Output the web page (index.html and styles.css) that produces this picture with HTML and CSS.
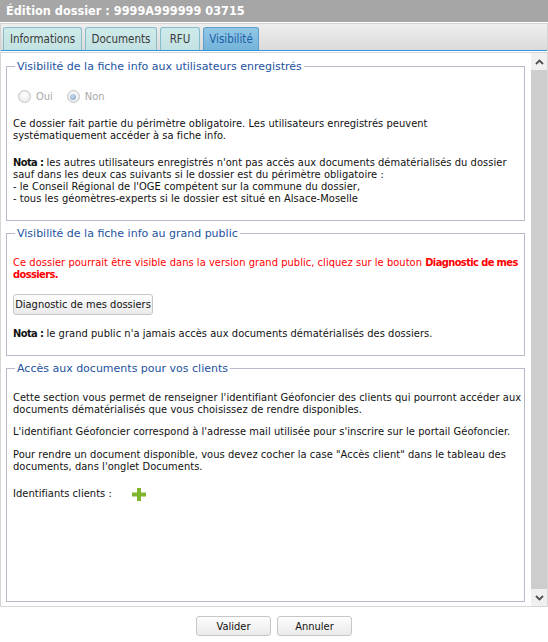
FILE: index.html
```html
<!DOCTYPE html>
<html lang="fr">
<head>
<meta charset="utf-8">
<title>Édition dossier</title>
<link rel="stylesheet" href="styles.css">
</head>
<body>
<div class="dialog">
  <div class="titlebar">Édition dossier : 9999A999999 03715</div>
  <div class="tabbar">
    <div class="tabs">
      <div class="tab tab-info">Informations</div>
      <div class="tab tab-docs">Documents</div>
      <div class="tab tab-rfu">RFU</div>
      <div class="tab tab-vis active">Visibilité</div>
    </div>
  </div>
  <div class="panel">
    <div class="scroll">
      <fieldset class="fs fs1">
        <legend>Visibilité de la fiche info aux utilisateurs enregistrés</legend>
        <div class="radios">
          <label class="radio"><input type="radio" name="vis" disabled><span>Oui</span></label>
          <label class="radio"><input type="radio" name="vis" checked disabled><span>Non</span></label>
        </div>
        <p class="txt p-first">Ce dossier fait partie du périmètre obligatoire. Les utilisateurs enregistrés peuvent<br>systématiquement accéder à sa fiche info.</p>
        <p class="txt p-nota"><b>Nota :</b> les autres utilisateurs enregistrés n'ont pas accès aux documents dématérialisés du dossier<br>sauf dans les deux cas suivants si le dossier est du périmètre obligatoire :<br>- le Conseil Régional de l'OGE compétent sur la commune du dossier,<br>- tous les géomètres-experts si le dossier est situé en Alsace-Moselle</p>
      </fieldset>
      <fieldset class="fs fs2">
        <legend>Visibilité de la fiche info au grand public</legend>
        <p class="txt red">Ce dossier pourrait être visible dans la version grand public, cliquez sur le bouton <b>Diagnostic de mes<br>dossiers.</b></p>
        <button class="btn btn-diag" type="button">Diagnostic de mes dossiers</button>
        <p class="txt p-nota2"><b>Nota :</b> le grand public n'a jamais accès aux documents dématérialisés des dossiers.</p>
      </fieldset>
      <fieldset class="fs fs3">
        <legend>Accès aux documents pour vos clients</legend>
        <p class="txt p-a">Cette section vous permet de renseigner l'identifiant Géofoncier des clients qui pourront accéder aux<br>documents dématérialisés que vous choisissez de rendre disponibles.</p>
        <p class="txt p-b">L'identifiant Géofoncier correspond à l'adresse mail utilisée pour s'inscrire sur le portail Géofoncier.</p>
        <p class="txt p-c">Pour rendre un document disponible, vous devez cocher la case "Accès client" dans le tableau des<br>documents, dans l'onglet Documents.</p>
        <div class="ids">
          <span class="txt">Identifiants clients :</span>
          <svg class="plus" width="14" height="13" viewBox="0 0 14 13" aria-label="Ajouter">
            <rect x="5" y="0" width="4" height="13" fill="#7fb52c"/>
            <rect x="0" y="4.5" width="14" height="4" fill="#7fb52c"/>
          </svg>
        </div>
      </fieldset>
    </div>
    <div class="scrollbar">
      <div class="sb-btn">
        <svg width="9" height="6" viewBox="0 0 9 6"><path d="M1 5 L4.5 1.5 L8 5" fill="none" stroke="#505050" stroke-width="1.8"/></svg>
      </div>
      <div class="sb-thumb"></div>
      <div class="sb-btn">
        <svg width="9" height="6" viewBox="0 0 9 6"><path d="M1 1 L4.5 4.5 L8 1" fill="none" stroke="#505050" stroke-width="1.8"/></svg>
      </div>
    </div>
  </div>
  <div class="actions">
    <button class="btn btn-act" type="button">Valider</button>
    <button class="btn btn-act" type="button">Annuler</button>
  </div>
</div>
</body>
</html>
```
FILE: styles.css
```css
html, body {
  margin: 0;
  padding: 0;
  background: #ffffff;
}
body {
  font-family: "DejaVu Sans Condensed", "DejaVu Sans", sans-serif;
  font-size: 11px;
  color: #111;
}
.dialog {
  width: 548px;
  height: 642px;
  display: flex;
  flex-direction: column;
}
.titlebar {
  height: 22px;
  line-height: 22px;
  background: #a6a6a6;
  color: #ffffff;
  font-weight: bold;
  font-size: 12.6px;
  padding-left: 6px;
  box-sizing: border-box;
}
.tabbar {
  margin-top: 1px;
  height: 28px;
  border: 1px solid #d3d3d3;
  border-bottom: none;
  background: linear-gradient(#eeeeee, #dadada);
  box-sizing: border-box;
}
.tabs {
  height: 27px;
  padding: 3px 0 0 2px;
  box-sizing: border-box;
  border-bottom: 1px solid #2e96de;
  display: flex;
  gap: 3px;
  align-items: flex-end;
}
.tab {
  height: 23px;
  box-sizing: border-box;
  border: 1px solid #86bccc;
  border-bottom: none;
  border-radius: 3px 3px 0 0;
  background: linear-gradient(#cfeaea, #c2e2e1);
  color: #3b3b3b;
  font-size: 11.5px;
  display: flex;
  align-items: center;
  justify-content: center;
}
.tab-info { width: 79px; }
.tab-docs { width: 72px; }
.tab-rfu { width: 40px; }
.tab-vis { width: 56px; }
.tab.active {
  background: linear-gradient(#92c8e6, #74b3da);
  border-color: #5d9fcc;
  color: #1a5fa6;
}
.panel {
  margin-top: 1px;
  height: 555px;
  border: 1px solid #d6d6d6;
  box-sizing: border-box;
  display: flex;
}
.scroll {
  flex: 1;
  padding-top: 7px;
  overflow: hidden;
}
.scrollbar {
  width: 16px;
  background: #f0f0f0;
  display: flex;
  flex-direction: column;
}
.sb-btn {
  height: 17px;
  display: flex;
  align-items: center;
  justify-content: center;
}
.sb-thumb {
  flex: 1;
  background: #cdcdcd;
}
.fs {
  margin: 0 6px 6px 5px;
  padding: 0 6px;
  border: 1px solid #b9b9c9;
  min-width: 0;
}
.fs legend {
  margin-left: 2px;
  padding: 0 2px 0 2px;
  color: #2452a0;
  font-family: "DejaVu Sans", sans-serif;
  font-size: 11px;
  line-height: 13px;
}
.txt {
  margin: 0;
  line-height: 11.7px;
  white-space: nowrap;
  letter-spacing: 0.05px;
}
.txt b {
  letter-spacing: -0.6px;
}
.radios {
  margin-top: 17px;
  display: flex;
  gap: 14px;
  height: 13px;
  padding-left: 5px;
}
.radio {
  display: flex;
  align-items: center;
  color: #a8a8a8;
  gap: 5px;
}
.radio input {
  appearance: none;
  -webkit-appearance: none;
  margin: 0;
  width: 13px;
  height: 13px;
  border-radius: 50%;
  border: 1px solid #c4c4c4;
  background: radial-gradient(circle at 50% 40%, #ffffff, #e4e4e4);
  box-sizing: border-box;
  position: relative;
}
.radio input:checked::after {
  content: "";
  position: absolute;
  left: 2.5px;
  top: 2.5px;
  width: 6px;
  height: 6px;
  border-radius: 50%;
  background: radial-gradient(circle at 40% 35%, #c8dcef, #7a9fc6);
}
.p-first { margin-top: 15px; }
.p-nota { margin-top: 16px; margin-bottom: 16px; }
.red { color: #ff0000; margin-top: 17px; }
.btn {
  font-family: inherit;
  font-size: 11px;
  color: #111;
  border: 1px solid #c6c6c6;
  border-radius: 3px;
  background: linear-gradient(#fdfdfd, #eaeaea);
  padding: 0;
  box-sizing: border-box;
}
.btn-diag {
  display: block;
  margin-top: 13px;
  width: 140px;
  height: 21px;
}
.p-nota2 { margin-top: 13px; margin-bottom: 16px; }
.p-a { margin-top: 17px; }
.p-b { margin-top: 10px; }
.p-c { margin-top: 12px; }
.ids {
  margin-top: 15px;
  height: 113px;
  display: flex;
  align-items: flex-start;
  gap: 20px;
}
.plus { display: block; }
.actions {
  margin-top: 9px;
  display: flex;
  justify-content: center;
  gap: 6px;
}
.btn-act {
  width: 75px;
  height: 20px;
}
```
